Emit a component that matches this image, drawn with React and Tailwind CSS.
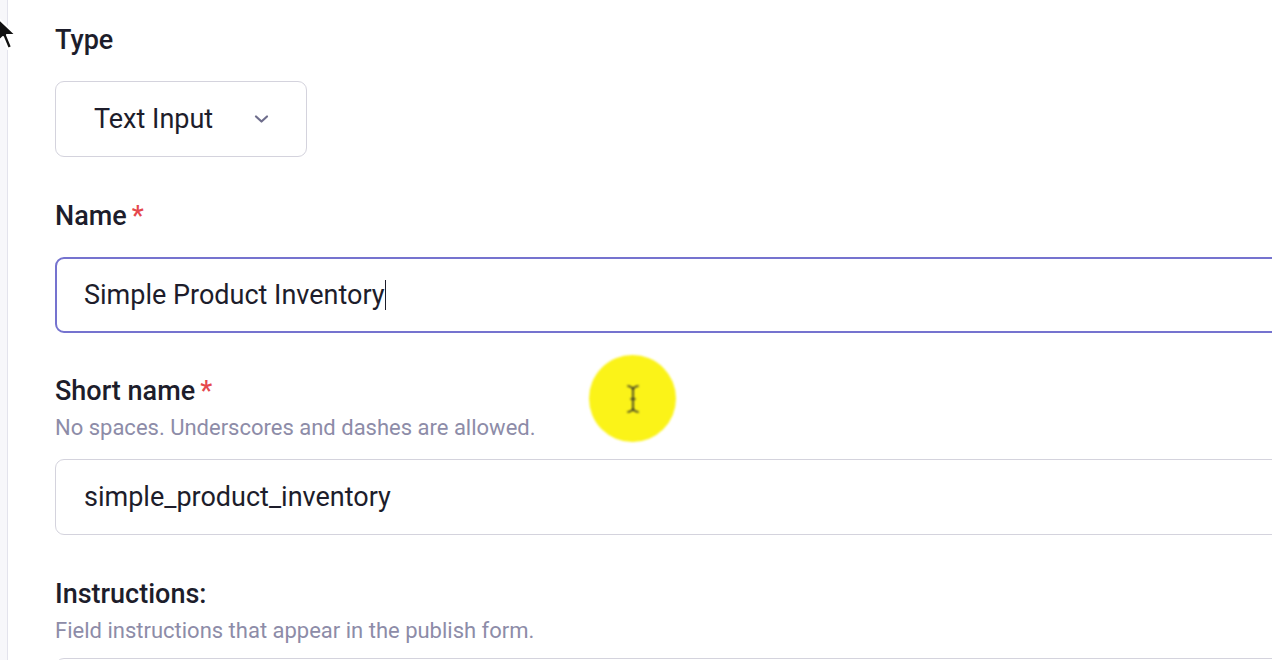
import React from "react";

const Label = ({ children, required, className = "" }) => (
  <div className={`shrink-0 text-[27px] leading-[32px] font-medium text-[#1d1d2b] ${className}`}>
    {children}
    {required && <span className="text-[#e5484d] ml-[5px]">*</span>}
  </div>
);

const Hint = ({ children, className = "" }) => (
  <div className={`shrink-0 text-[22px] leading-[28px] text-[#8d8ca8] ${className}`}>{children}</div>
);

const App = () => {
  return (
    <div
      className="relative w-[1272px] h-[660px] overflow-hidden bg-white flex"
      style={{ fontFamily: "Roboto, 'Liberation Sans', sans-serif" }}>
      <div className="w-[8px] bg-[#f7f7fa] border-r border-[#e3e3ec] shrink-0" />

      <div className="flex flex-col pl-[47px] pt-[24px]">
        <Label>Type</Label>
        <div className="shrink-0 mt-[25px] w-[252px] h-[76px] rounded-[9px] border border-[#d4d3dd] flex items-center pl-[38px] pr-[37px] justify-between">
          <span className="text-[27px] text-[#1d1d2b]">Text Input</span>
          <svg width="15" height="10" viewBox="0 0 15 10" fill="none">
            <path d="M2 2.5 L7.5 7.5 L13 2.5" stroke="#6e6d8c" strokeWidth="2.2" strokeLinecap="round" strokeLinejoin="round" />
          </svg>
        </div>

        <Label required className="mt-[43px]">Name</Label>
        <div className="shrink-0 mt-[25px] w-[1300px] h-[76px] rounded-[9px] border-2 border-[#7573cf] flex items-center pl-[27px]">
          <span className="text-[27px] text-[#1d1d2b]">Simple Product Inventory</span>
          <span className="w-[1.5px] h-[30px] bg-[#1d1d2b]" />
        </div>

        <Label required className="mt-[42px]">Short name</Label>
        <Hint className="mt-[7px]">No spaces. Underscores and dashes are allowed.</Hint>
        <div className="shrink-0 mt-[17px] w-[1300px] h-[76px] rounded-[9px] border border-[#d4d3dd] flex items-center pl-[28px]">
          <span className="text-[27px] text-[#1d1d2b]">simple_product_inventory</span>
        </div>

        <Label className="mt-[43px]">Instructions:</Label>
        <Hint className="mt-[7px]">Field instructions that appear in the publish form.</Hint>
        <div className="shrink-0 mt-[13px] w-[1300px] h-[76px] rounded-[9px] border border-[#d4d3dd]" />
      </div>

      {/* click highlight with text cursor */}
      <div className="absolute left-[589px] top-[355px] w-[87px] h-[87px] rounded-full bg-[#fbf318] blur-[1px] flex items-center justify-center">
        <svg width="14" height="30" viewBox="0 0 14 30" fill="none">
          <path d="M2 2 Q7 3 7 6 L7 24 Q7 27 2 28 M12 2 Q7 3 7 6 M7 24 Q7 27 12 28 M5 15 L9 15" stroke="#2a2a2a" strokeWidth="1.6" strokeLinecap="round" />
        </svg>
      </div>

      {/* mouse pointer */}
      <svg className="absolute left-[-6px] top-[14px]" width="26" height="40" viewBox="0 0 26 40">
        <path d="M2 2 L2 30 L9 23 L14 35 L18 33 L13 21 L22 21 Z" fill="#111" stroke="#fff" strokeWidth="2" strokeLinejoin="round" />
      </svg>
    </div>
  );
};

export default App;
